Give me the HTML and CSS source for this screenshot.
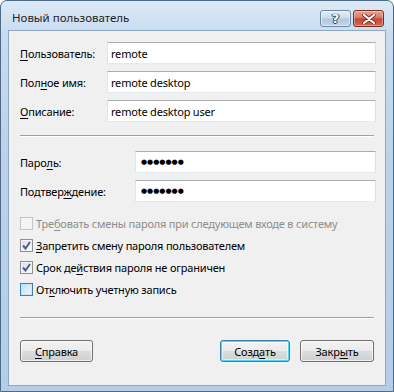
FILE: index.html
```html
<!DOCTYPE html>
<html lang="ru">
<head>
<meta charset="utf-8">
<title>Новый пользователь</title>
<link rel="stylesheet" href="styles.css">
</head>
<body>
<div class="window">
  <div class="titlebar">
    <span class="title">Новый пользователь</span>
    <div class="caption-buttons">
      <div class="cap-btn help"><span>?</span></div>
      <div class="cap-btn close">
        <svg width="14" height="10" viewBox="0 0 14 10"><path d="M2 1 L12 9 M12 1 L2 9" stroke="#7a1c14" stroke-width="3.6" stroke-linecap="round"/><path d="M2 1 L12 9 M12 1 L2 9" stroke="#fff" stroke-width="2.2" stroke-linecap="round"/></svg>
      </div>
    </div>
  </div>
  <div class="client">
    <div class="form-grid first">
      <label class="lbl"><u>П</u>ользователь:</label>
      <div class="field">remote</div>
      <label class="lbl">Пол<u>н</u>ое имя:</label>
      <div class="field">remote desktop</div>
      <label class="lbl"><u>О</u>писание:</label>
      <div class="field">remote desktop user</div>
    </div>
    <div class="sep sep1"></div>
    <div class="form-grid second">
      <label class="lbl">Паро<u>л</u>ь:</label>
      <div class="field pw">●●●●●●●</div>
      <label class="lbl">Подтвер<u>ж</u>дение:</label>
      <div class="field pw">●●●●●●●</div>
    </div>
    <div class="checks">
      <div class="check disabled"><span class="box"></span><span>Тре<u>б</u>овать смены пароля при следующем входе в систему</span></div>
      <div class="check"><span class="box checked"><svg width="9" height="9" viewBox="0 0 9 9"><path d="M1 4.5 L3.5 7.5 L8 1" fill="none" stroke="#4a5f97" stroke-width="2"/></svg></span><span><u>З</u>апретить смену пароля пользователем</span></div>
      <div class="check"><span class="box checked"><svg width="9" height="9" viewBox="0 0 9 9"><path d="M1 4.5 L3.5 7.5 L8 1" fill="none" stroke="#4a5f97" stroke-width="2"/></svg></span><span>Срок де<u>й</u>ствия пароля не ограничен</span></div>
      <div class="check"><span class="box hot"></span><span>От<u>к</u>лючить учетную запись</span></div>
    </div>
    <div class="sep sep2"></div>
    <div class="buttons">
      <div class="btn"><u>С</u>правка</div>
      <div class="spacer"></div>
      <div class="btn default">Созд<u>а</u>ть</div>
      <div class="btn wide">Закр<u>ы</u>ть</div>
    </div>
  </div>
</div>
</body>
</html>
```
FILE: styles.css
```css
* { box-sizing: border-box; }
html, body { margin: 0; padding: 0; }
body {
  width: 394px;
  height: 392px;
  font-family: "Noto Sans", "Open Sans", sans-serif;
  font-size: 11px;
  letter-spacing: -0.2px;
  color: #000;
  background: #fff;
}
u { text-decoration: underline; text-underline-offset: 2px; text-decoration-thickness: 1px; }

.window {
  width: 394px;
  height: 392px;
  border: 1px solid #4d6a88;
  border-radius: 7px 7px 0 0;
  background: linear-gradient(to bottom, #dce9f6 0%, #c9dcf0 8%, #bcd2ea 40%, #b6cde7 100%);
  padding: 0 7px 5px 7px;
  display: flex;
  flex-direction: column;
}

.titlebar {
  height: 29px;
  display: flex;
  align-items: flex-start;
  justify-content: space-between;
}
.title {
  margin-top: 9px;
  margin-left: 4px;
  font-size: 11.5px;
  letter-spacing: 0;
  color: #1e1e1e;
}
.caption-buttons {
  display: flex;
  gap: 2px;
  margin-top: 9px;
  margin-right: 2px;
}
.cap-btn {
  height: 17px;
  border-radius: 3px;
  display: flex;
  align-items: center;
  justify-content: center;
}
.help {
  width: 31px;
  border: 1px solid #6e87a4;
  background: linear-gradient(to bottom, #e3ecf6 0%, #cbdaea 48%, #b3c7dd 52%, #c2d4e7 100%);
  box-shadow: inset 0 0 0 1px rgba(255,255,255,0.5);
}
.help span {
  font-family: "DejaVu Sans", sans-serif;
  font-weight: bold;
  font-size: 13px;
  letter-spacing: 0;
  color: #fff;
  line-height: 1;
  text-shadow: 0 0 1px #2d4668, 0 0 1px #2d4668, 1px 0 0 #2d4668, -1px 0 0 #2d4668, 0 1px 0 #2d4668;
}
.close {
  width: 31px;
  border: 1px solid #7a2b22;
  background: linear-gradient(to bottom, #e8a493 0%, #d47a66 45%, #c24a36 52%, #d26a52 100%);
  box-shadow: inset 0 0 0 1px rgba(255,255,255,0.35);
}

.client {
  flex: 1;
  background: #f0f0f0;
  border: 1px solid #8ea8c3;
  padding: 11px 10px 0 11px;
  display: flex;
  flex-direction: column;
}

.form-grid {
  display: grid;
  row-gap: 7px;
  align-items: center;
}
.form-grid.first { grid-template-columns: 87px 269px; }
.form-grid.second { grid-template-columns: 115px 241px; }

.lbl { white-space: nowrap; }

.field {
  height: 22px;
  background: #fff;
  border-top: 1px solid #abadb3;
  border-left: 1px solid #e2e3ea;
  border-right: 1px solid #dbdfe6;
  border-bottom: 1px solid #e3e9ef;
  padding: 0 3px;
  display: flex;
  align-items: center;
  white-space: nowrap;
}
.field.pw {
  font-family: "DejaVu Sans", sans-serif;
  font-size: 7px;
  letter-spacing: 0;
  padding-left: 5px;
}

.sep {
  height: 2px;
  border-top: 1px solid #a0a0a0;
  border-bottom: 1px solid #fff;
  margin-right: 1px;
}
.sep1 { margin-top: 13px; margin-bottom: 14px; }

.checks {
  margin-top: 10px;
  display: flex;
  flex-direction: column;
}
.check {
  height: 22px;
  display: flex;
  align-items: center;
  gap: 3px;
  white-space: nowrap;
}
.check.disabled { color: #8d8d8d; }
.box {
  width: 13px;
  height: 13px;
  border: 1px solid #8e8f8f;
  background: linear-gradient(135deg, #dcdcdc 0%, #f4f4f4 70%, #fff 100%);
  box-shadow: inset 0 0 0 1px #f4f4f4;
  display: flex;
  align-items: center;
  justify-content: center;
  flex: none;
}
.check.disabled .box {
  border-color: #c5c5c5;
  background: #f4f4f4;
  box-shadow: none;
}
.box.hot {
  border-color: #3c7fb1;
  background: linear-gradient(135deg, #b9dff6 0%, #dff1fc 70%, #eaf6fd 100%);
  box-shadow: inset 0 0 0 1px #c8e6fa;
}

.sep2 { margin-top: 17px; }

.buttons {
  margin-top: 21px;
  display: flex;
  align-items: center;
  gap: 10px;
  margin-right: 1px;
}
.spacer { flex: 1; }
.btn {
  height: 22px;
  width: 73px;
  border: 1px solid #707070;
  border-radius: 3px;
  background: linear-gradient(to bottom, #f2f2f2 0%, #ebebeb 48%, #dddddd 52%, #cfcfcf 100%);
  box-shadow: inset 0 0 0 1px rgba(255,255,255,0.7);
  display: flex;
  align-items: center;
  justify-content: center;
}
.btn.default {
  width: 70px;
  border-color: #3c7fb1;
  box-shadow: inset 0 0 0 1px #48d8fb, inset 0 0 0 2px rgba(255,255,255,0.5);
  background: linear-gradient(to bottom, #f2f2f2 0%, #ebebeb 48%, #dddddd 52%, #cfcfcf 100%);
}
.btn.wide { width: 74px; }
```
